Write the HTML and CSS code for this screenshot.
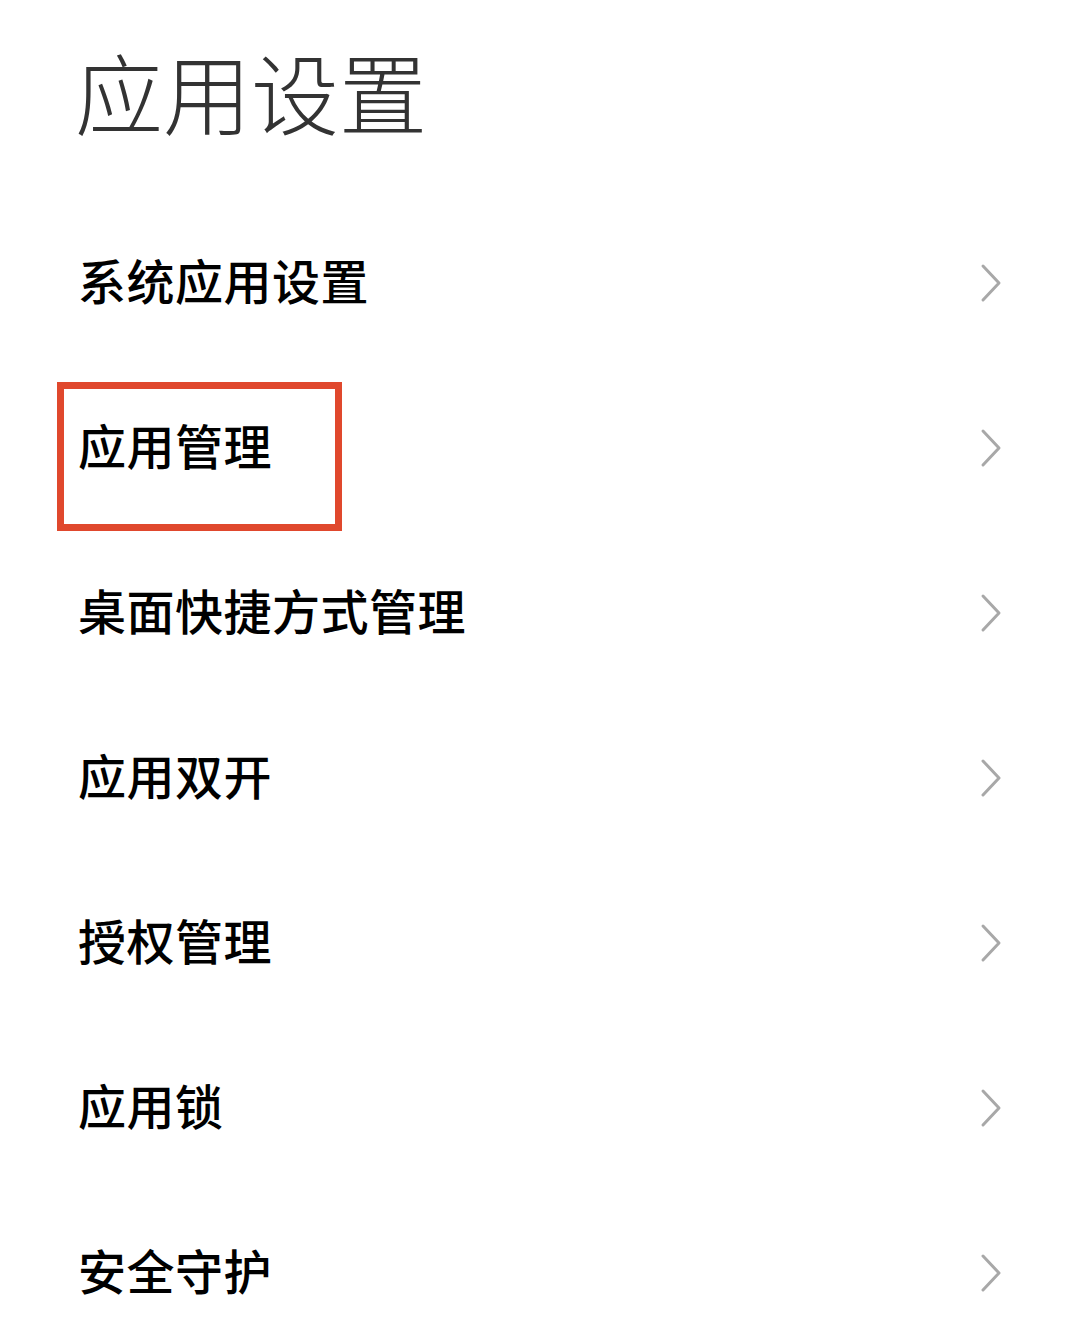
FILE: index.html
```html
<!DOCTYPE html>
<html lang="zh-CN">
<head>
    <meta charset="UTF-8">
    <meta name="viewport" content="width=device-width, initial-scale=1.0">
    <title>应用设置</title>
    <link rel="stylesheet" href="styles.css">
</head>
<body>
    <div class="page">
        <h1 class="title">应用设置</h1>

        <ul class="menu">
            <li class="menu-item">
                <span class="label">系统应用设置</span>
                <svg class="chevron" viewBox="0 0 22 40"><path d="M3 3 L19 20 L3 37"/></svg>
            </li>
            <li class="menu-item">
                <span class="label">应用管理</span>
                <svg class="chevron" viewBox="0 0 22 40"><path d="M3 3 L19 20 L3 37"/></svg>
                <div class="highlight"></div>
            </li>
            <li class="menu-item">
                <span class="label">桌面快捷方式管理</span>
                <svg class="chevron" viewBox="0 0 22 40"><path d="M3 3 L19 20 L3 37"/></svg>
            </li>
            <li class="menu-item">
                <span class="label">应用双开</span>
                <svg class="chevron" viewBox="0 0 22 40"><path d="M3 3 L19 20 L3 37"/></svg>
            </li>
            <li class="menu-item">
                <span class="label">授权管理</span>
                <svg class="chevron" viewBox="0 0 22 40"><path d="M3 3 L19 20 L3 37"/></svg>
            </li>
            <li class="menu-item">
                <span class="label">应用锁</span>
                <svg class="chevron" viewBox="0 0 22 40"><path d="M3 3 L19 20 L3 37"/></svg>
            </li>
            <li class="menu-item">
                <span class="label">安全守护</span>
                <svg class="chevron" viewBox="0 0 22 40"><path d="M3 3 L19 20 L3 37"/></svg>
            </li>
        </ul>
    </div>
</body>
</html>
```

FILE: styles.css
```css
* {
    box-sizing: border-box;
    margin: 0;
    padding: 0;
}

body {
    background: #ffffff;
    color: #111111;
    font-family: "Noto Sans CJK SC", "Noto Sans", sans-serif;
}

.page {
    padding: 0 70px 0 78px;
}

.title {
    height: 200px;
    padding-top: 46px;
    font-size: 88px;
    line-height: 88px;
    font-weight: 300;
    color: #333333;
    margin-left: -3px;
}

.menu {
    list-style: none;
}

.menu-item {
    position: relative;
    height: 165px;
    display: flex;
    align-items: center;
    justify-content: space-between;
}

.label {
    font-size: 48px;
    line-height: 48px;
    padding-bottom: 8px;
    font-weight: 500;
    color: #000000;
    letter-spacing: 0.5px;
}

.chevron {
    width: 22px;
    height: 40px;
    margin-right: -1px;
}

.chevron path {
    fill: none;
    stroke: #a8a8a8;
    stroke-width: 3;
    stroke-linecap: round;
    stroke-linejoin: round;
}

.highlight {
    position: absolute;
    left: -21px;
    top: 17px;
    width: 285px;
    height: 149px;
    border: 7px solid #e0482d;
}
```
